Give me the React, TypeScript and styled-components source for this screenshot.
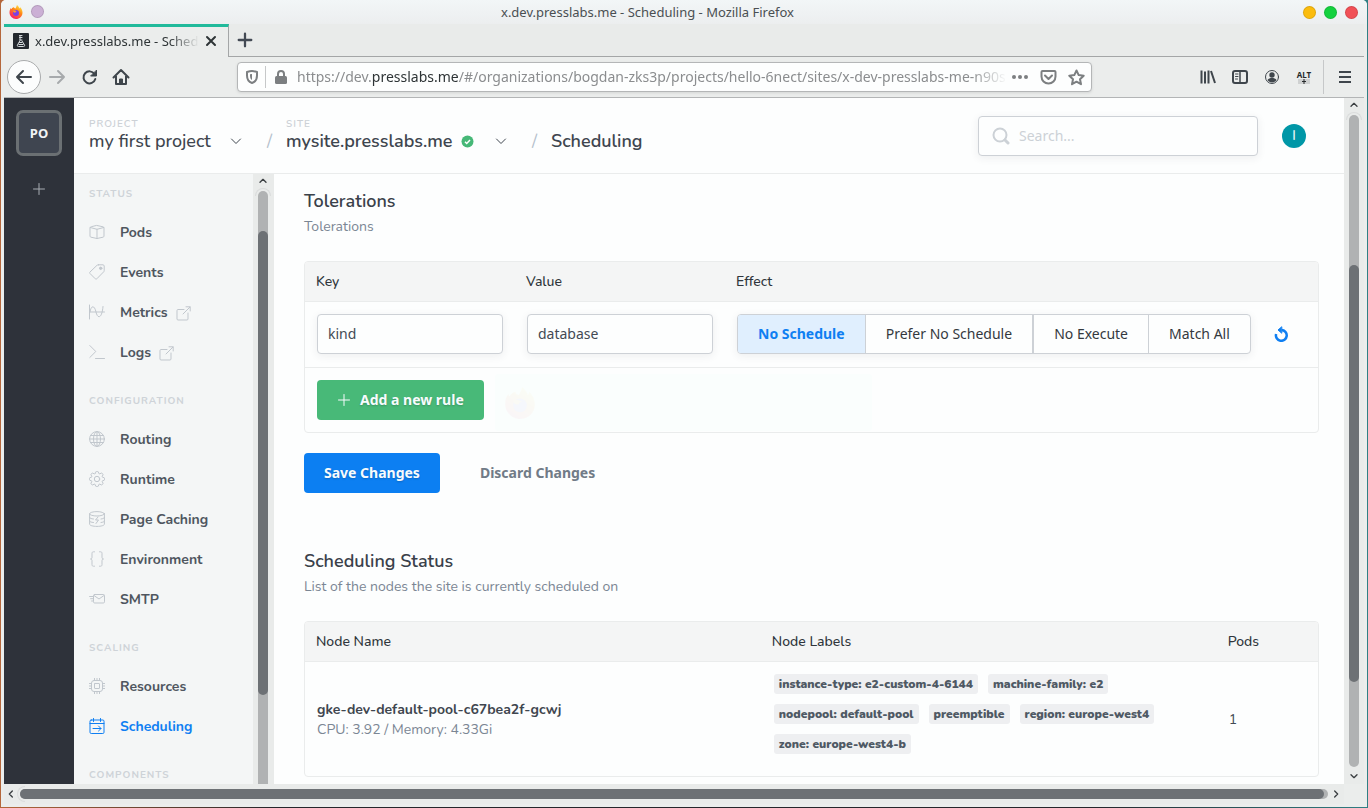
import React from "react";
import styled, { createGlobalStyle, css } from "styled-components";

const ui = `"Noto Sans", "Open Sans", sans-serif`;
const body = `Nunito, Lato, "Noto Sans", sans-serif`;

const GlobalStyle = createGlobalStyle`
  *, *::before, *::after { box-sizing: border-box; }
  html, body { margin: 0; height: 100%; }
  body { background: #2b2b30; font-family: ${body}; font-size: 14px; line-height: 20px; color: #434a54; }
  button, input { font: inherit; color: inherit; }
  button { margin: 0; padding: 0; border: 0; background: none; }
  h1, h2, p { margin: 0; }
  svg { display: block; flex: none; }
`;

/* ---------- browser window ---------- */

const Desktop = styled.div`
  height: 100vh;
  padding: 0 1px 1px;
  background: linear-gradient(90deg, #b5673b, #26262b 20%, #26262b 80%, #2f7f84);
`;

const Window = styled.div`
  height: 100%;
  display: flex;
  flex-direction: column;
  padding: 0 3px 3px;
  border-radius: 5px 5px 0 0;
  overflow: hidden;
  background: #ebedec;
`;

const TitleBar = styled.header`
  flex: none;
  display: flex;
  align-items: center;
  height: 24px;
  margin: 0 -3px;
  padding: 0 9px 0 8px;
  background: linear-gradient(#f2f6f7, #eceeef);
  font-family: ${ui};
  font-size: 13px;
  color: #4a4f52;
`;

const TitleText = styled.span`
  flex: 1;
  text-align: center;
`;

const DotGroup = styled.div<{ $lead?: boolean }>`
  display: flex;
  gap: 8px;
  ${(p) => p.$lead && css`padding-left: 52px;`}
`;

const Dot = styled.button<{ $color: string }>`
  width: 13px;
  height: 13px;
  border-radius: 50%;
  background: ${(p) => p.$color};
  box-shadow: inset 0 0 0 1px rgba(0, 0, 0, 0.12);
`;

const TabStrip = styled.div`
  flex: none;
  display: flex;
  height: 33px;
  background: #e9ebea;
`;

const Tab = styled.div`
  display: flex;
  align-items: center;
  gap: 6px;
  width: 225px;
  padding: 0 11px 2px 9px;
  border-top: 3px solid #21ba9b;
  border-right: 1px solid #a4a6a7;
  background: #ebedec;
  font-family: ${ui};
  font-size: 13px;
  color: #2e3436;
`;

const TabTitle = styled.span`
  flex: 1;
  min-width: 0;
  overflow: hidden;
  white-space: nowrap;
  mask-image: linear-gradient(90deg, #000 82%, transparent);
`;

const TabRest = styled.div`
  flex: 1;
  display: flex;
  align-items: center;
  padding-left: 8px;
  border-bottom: 1px solid #a4a6a7;
`;

const IconButton = styled.button`
  flex: none;
  display: flex;
  align-items: center;
  justify-content: center;
`;

const Toolbar = styled.nav`
  flex: none;
  display: flex;
  align-items: center;
  height: 41px;
  padding: 0 11px 0 3px;
  border-bottom: 1px solid #b3b5b6;
  color: #3f464c;
`;

const BackButton = styled(IconButton)`
  width: 34px;
  height: 34px;
  border: 1px solid #a9abac;
  border-radius: 50%;
  background: #fcfdfd;
`;

const ToolButton = styled(IconButton)<{ $faded?: boolean }>`
  width: 32px;
  height: 32px;
  ${(p) => p.$faded && css`color: #a7aaac;`}
`;

const UrlBar = styled.div`
  flex: 1;
  min-width: 0;
  display: flex;
  align-items: center;
  height: 30px;
  margin: 0 100px;
  padding: 0 6px 0 7px;
  border: 1px solid #b4b6b7;
  border-radius: 4px;
  background: #fdfefe;
  box-shadow: 0 1px 3px rgba(0, 0, 0, 0.1);
  color: #7c7f81;
  font-family: ${ui};
`;

const UrlText = styled.span`
  flex: 1;
  min-width: 0;
  margin: 0 4px 0 9px;
  overflow: hidden;
  white-space: nowrap;
  color: #8b8d8f;
  mask-image: linear-gradient(90deg, #000 95%, transparent);

  strong { font-weight: 400; color: #2e3436; }
`;

const UrlActions = styled.div`
  display: flex;
  align-items: center;
  gap: 11px;
`;

const Rule = styled.span<{ $tall?: boolean }>`
  flex: none;
  width: 1px;
  height: ${(p) => (p.$tall ? 34 : 22)}px;
  margin: 0 ${(p) => (p.$tall ? 13 : 8)}px 0 ${(p) => (p.$tall ? 3 : 6)}px;
  background: #c6c8c9;
`;

const AltMark = styled.span`
  display: flex;
  flex-direction: column;
  align-items: center;
  font: 700 8px/8px ${ui};
  color: #26292b;

  svg { background: #cfd1d1; }
`;

/* ---------- scroll bars ---------- */

const Bar = styled.div<{ $across?: boolean; $size?: number }>`
  flex: none;
  display: flex;
  flex-direction: ${(p) => (p.$across ? "row" : "column")};
  ${(p) => (p.$across ? "height" : "width")}: ${(p) => p.$size ?? 20}px;
  padding: ${(p) => (p.$across ? "5px 0" : "0 6px 0 5px")};
  background: #e9ebea;
  color: #3b3f42;
`;

const BarArrow = styled.span<{ $across?: boolean }>`
  flex: none;
  display: flex;
  align-items: center;
  justify-content: center;
  ${(p) =>
    p.$across
      ? "width: 16px; height: 10px; &:first-child { padding-right: 2px; }"
      : "width: 10px; height: 17px; padding-bottom: 3px; &:last-child { padding: 1px 0 0; }"}
`;

const Trough = styled.div<{ $across?: boolean; $open?: boolean }>`
  position: relative;
  flex: 1;
  display: flex;
  flex-direction: ${(p) => (p.$across ? "row" : "column")};
  ${(p) => (p.$across ? "height" : "width")}: 10px;
  border-radius: ${(p) => (p.$open ? "5px 5px 0 0" : "5px")};
  background: #b0b2b3;

  &::before {
    content: "";
    position: absolute;
    ${(p) =>
      p.$across
        ? "left: -3px; top: -3px; width: 8px; height: 16px; border-radius: 8px 0 0 8px;"
        : "left: -3px; top: -3px; width: 16px; height: 8px; border-radius: 8px 8px 0 0;"}
    border-style: solid;
    border-color: #dadcdc;
    border-width: ${(p) => (p.$across ? "1px 0 1px 1px" : "1px 1px 0")};
  }
`;

const Part = styled.span<{ $grow: number; $thumb?: boolean }>`
  flex: ${(p) => p.$grow} 1 0;
  border-radius: 5px;
  ${(p) => p.$thumb && css`position: relative; background: #6d7175;`}
`;

const BottomBar = styled.div`
  flex: none;
  padding-right: 20px;
`;

/* ---------- dashboard ---------- */

const Viewport = styled.div`
  flex: 1;
  min-height: 0;
  display: flex;
  background: #fdfefe;
`;

const Rail = styled.aside`
  flex: none;
  display: flex;
  flex-direction: column;
  align-items: center;
  gap: 26px;
  width: 70px;
  padding-top: 12px;
  background: #2e323a;
  color: #a8adb3;
`;

const OrgBadge = styled.button`
  width: 46px;
  height: 46px;
  border: 3px solid #6b7073;
  border-radius: 7px;
  background: #3f4550;
  color: #f2f4f5;
  font-family: ${ui};
  font-size: 13px;
  font-weight: 700;
`;

const Page = styled.div`
  flex: 1;
  min-width: 0;
  display: flex;
  flex-direction: column;
`;

const TopBar = styled.header`
  flex: none;
  display: flex;
  align-items: flex-start;
  height: 76px;
  padding: 18px 38px 0 15px;
  border-bottom: 1px solid #eaecec;
`;

const Crumb = styled.div<{ $width?: number }>`
  display: flex;
  flex-direction: column;
  ${(p) => p.$width && css`width: ${p.$width}px;`}
`;

const Caption = styled.span`
  height: 14px;
  line-height: 16px;
  font-size: 10px;
  font-weight: 600;
  letter-spacing: 1px;
  text-transform: uppercase;
  color: #ccd1d6;
`;

const CrumbLine = styled.div<{ $strong?: boolean }>`
  display: flex;
  align-items: center;
  height: 22px;
  font-size: 18px;
  font-weight: ${(p) => (p.$strong ? 650 : 500)};
  color: #3f464f;
  white-space: nowrap;
`;

const CrumbToggle = styled(IconButton)`
  width: 12px;
  height: 12px;
  margin-left: auto;
`;

const Verified = styled.span`
  margin-left: 9px;
`;

const Slash = styled.span`
  width: 44px;
  padding: 14px 14px 0 0;
  line-height: 22px;
  font-size: 18px;
  text-align: right;
  color: #b4c0cc;
`;

const fieldBox = css`
  height: 40px;
  border: 1px solid #cdd1d6;
  border-radius: 4px;
  background: #fdfefe;
  box-shadow: 0 2px 8px rgba(46, 50, 58, 0.08);
  font-family: ${ui};
`;

const SearchBox = styled.label`
  ${fieldBox}
  display: flex;
  align-items: center;
  gap: 9px;
  width: 280px;
  margin-left: auto;
  padding: 0 13px;
  color: #ccd1d6;

  input {
    flex: 1;
    min-width: 0;
    padding: 0;
    border: 0;
    outline: 0;
    background: none;
  }
  input::placeholder { color: #ccd1d6; opacity: 1; }
`;

const Avatar = styled.button`
  width: 24px;
  height: 24px;
  margin: 8px 0 0 24px;
  border-radius: 50%;
  background: #0097a7;
  color: #e8f6f7;
  font-size: 13px;
  font-weight: 600;
`;

const Columns = styled.div`
  flex: 1;
  min-height: 0;
  display: flex;
`;

const SideNav = styled.nav`
  flex: none;
  width: 179px;
  overflow: hidden;
  background: #f4f6f6;
`;

const NavCaption = styled.h2`
  height: 20px;
  margin: 18px 0 9px 15px;
  font-size: 10px;
  font-weight: 700;
  line-height: 22px;
  letter-spacing: 1px;
  text-transform: uppercase;
  color: #ced3d8;

  &:first-child { margin-top: 9px; }
`;

const NavLink = styled.a<{ $active?: boolean }>`
  display: flex;
  align-items: center;
  gap: 15px;
  height: 40px;
  padding-left: 15px;
  font-weight: 700;
  text-decoration: none;
  color: ${(p) => (p.$active ? "#0f7ff2" : "#4f565f")};

  svg { color: ${(p) => (p.$active ? "#0f7ff2" : "#c1c7cd")}; }
`;

const NavText = styled.span`
  display: flex;
  align-items: center;
  gap: 8px;
  padding-top: 2px;
`;

const Content = styled.main`
  flex: 1;
  min-width: 0;
  padding: 15px 25px 0 30px;
  overflow: hidden;
`;

const SectionTitle = styled.h1`
  font-size: 18px;
  font-weight: 650;
  line-height: 24px;
  color: #3a414a;
`;

const SectionNote = styled.p`
  margin: 4px 0 24px;
  color: #7b8694;
`;

const Table = styled.table`
  width: 100%;
  table-layout: fixed;
  border: 1px solid #eaecec;
  border-radius: 4px;
  border-spacing: 0;
  overflow: hidden;

  th {
    height: 40px;
    padding: 0 11px;
    border-bottom: 1px solid #eaecec;
    background: #f4f5f5;
    font-weight: 500;
    text-align: left;
    color: #2f353b;
  }
`;

const Col = styled.col<{ $width?: string }>`
  width: ${(p) => p.$width ?? "auto"};
`;

const Cell = styled.td<{ $text?: boolean; $ruled?: boolean }>`
  padding: ${(p) => (p.$text ? "14px" : "12px")} 12px ${(p) => (p.$ruled ? "13px" : "12px")};
  ${(p) => p.$ruled && css`border-bottom: 1px solid #eaecec;`}
`;

const TextField = styled.input`
  ${fieldBox}
  display: block;
  width: 100%;
  padding: 0 10px 2px;
  outline: 0;
`;

const EffectCell = styled.div`
  display: flex;
  align-items: center;
  gap: 22px;
`;

const ButtonGroup = styled.div`
  ${fieldBox}
  display: flex;
  overflow: hidden;
`;

const Choice = styled.button<{ $on?: boolean }>`
  padding: 0 20px;
  white-space: nowrap;
  color: #34393e;
  & + & { border-left: 1px solid #cdd1d6; }
  & + & + & { border-left-width: 2px; }
  & + & + & + & { border-left-width: 1px; }
  ${(p) => p.$on && css`background: #e0effe; color: #0f7ff2; font-weight: 700;`}
`;

const ResetButton = styled(IconButton)`
  color: #0f7ff2;
`;

const Action = styled.button<{ $tone: "green" | "blue" | "plain" }>`
  display: inline-flex;
  align-items: center;
  gap: 9px;
  height: 40px;
  padding: 0 20px;
  border-radius: 4px;
  font-family: ${ui};
  font-weight: 700;
  ${(p) =>
    p.$tone === "plain"
      ? css`color: #717b87;`
      : css`
          background: ${p.$tone === "green" ? "#48b978" : "#0c7ff2"};
          color: #f7fbfd;
          text-shadow: 0 1px 2px rgba(0, 0, 0, 0.2);
        `}
`;

const AddRow = styled.div`
  position: relative;
  display: flex;
`;

/* a window-title bubble in the last moments of its fade */
const Bubble = styled.div`
  position: absolute;
  left: 178px;
  top: -6px;
  display: flex;
  align-items: center;
  width: 377px;
  height: 57px;
  padding-left: 9px;
  border-radius: 3px;
  background: #fafefd;

  svg { opacity: 0.03; }
`;

const ActionRow = styled.div`
  display: flex;
  gap: 20px;
  margin: 20px 0 56px;
`;

const NodeName = styled.div`
  font-weight: 700;
  color: #3f464f;
`;

const NodeSpecs = styled.div`
  color: #7b8694;
`;

const LabelList = styled.ul`
  display: flex;
  flex-wrap: wrap;
  gap: 10px;
  max-width: 400px;
  margin: 0 0 10px;
  padding: 0 0 0 1px;
  list-style: none;
`;

const Label = styled.li`
  height: 20px;
  padding: 0 5px;
  border-radius: 3px;
  background: #eeeff1;
  font-size: 12px;
  font-weight: 900;
  line-height: 20px;
  color: #4f5964;
`;

/* ---------- drawings ---------- */

type GlyphProps = { size?: number; width?: number; view?: number; children: React.ReactNode };

const Glyph = ({ size = 16, width = 1, view = 16, children }: GlyphProps) => (
  <svg
    width={size}
    height={size}
    viewBox={`0 0 ${view} ${view}`}
    fill="none"
    stroke="currentColor"
    strokeWidth={width}
    strokeLinecap="round"
    strokeLinejoin="round"
    aria-hidden="true"
  >
    {children}
  </svg>
);

const FirefoxLogo = ({ size = 14 }: { size?: number }) => (
  <svg width={size} height={size} viewBox="0 0 28 28" aria-hidden="true">
    <defs>
      <linearGradient id="ff-flame" x1="0.8" y1="0" x2="0.2" y2="1">
        <stop offset="0" stopColor="#fff04a" />
        <stop offset="0.4" stopColor="#ff8a16" />
        <stop offset="0.8" stopColor="#ff3750" />
        <stop offset="1" stopColor="#e31587" />
      </linearGradient>
    </defs>
    <path
      d="M16 0c2 2 4 4 5 7 1-1 1-2 1-3 3 3 5 7 5 11 0 8-6 13-13 13S1 22 1 15c0-4 1-7 3-9 0 1 0 2 1 2 1-2 3-3 5-4 0 1 1 3 3 3 1-2 2-4 3-7z"
      fill="url(#ff-flame)"
    />
    <circle cx="14" cy="16" r="6" fill="#7b3fe4" />
    <path d="M8 12c3-2 6 0 8 1-2 0-3 1-3 2-2 1-4 0-5-3z" fill="#ff9a2a" />
  </svg>
);

const Favicon = () => (
  <svg width="16" height="16" viewBox="0 0 16 16" aria-hidden="true">
    <rect width="16" height="16" rx="1" fill="#23282e" />
    <path
      d="M6.500 2.500h2.500M6.500 4.500h2.500M7 2.500v5L4.500 12c-.4 1 0 1.500 1 1.500h5c1 0 1.400-.5 1-1.500L9 8M7 7h2M6.500 9.500h2.500M6 11.500h4"
      fill="none"
      stroke="#d5dadd"
      strokeLinecap="round"
    />
  </svg>
);

const Cross = () => (
  <Glyph size={12} view={12} width={2}><path d="M2 2l8 8M10 2l-8 8" /></Glyph>
);
const Plus = ({ size = 14, width = 1 }: { size?: number; width?: number }) => (
  <Glyph size={size} view={14} width={width}><path d="M7 1.500v11M1.500 7h11" /></Glyph>
);
const ArrowLeft = () => (
  <Glyph size={18} view={18} width={2}><path d="M16 9H2M8 3L2 9l6 6" /></Glyph>
);
const ArrowRight = () => (
  <Glyph size={18} view={18} width={2}><path d="M2 9h14M10 3l6 6-6 6" /></Glyph>
);
const Reload = () => (
  <Glyph size={17} view={17} width={2}>
    <path d="M13.500 5A6 6 0 1 0 14.300 10" />
    <path d="M15.500 1.500v5.500H10z" fill="currentColor" strokeWidth={1} />
  </Glyph>
);
const Home = () => (
  <Glyph size={18} view={18} width={2}>
    <path d="M1.500 9.500L9 2l7.500 7.500M4 8v8h10V8" />
    <path d="M7.500 16v-5h3v5z" fill="currentColor" strokeWidth={1} />
  </Glyph>
);
const Shield = () => (
  <Glyph size={14} view={14} width={2}>
    <path d="M7 1c2 0 3.500.5 5 1v3.500c0 4-2 6.500-5 7.500-3-1-5-3.500-5-7.500V2c1.500-.5 3-1 5-1z" />
    <path d="M7 4v6c-1.500-1-2-2.500-2-4.500V4.300z" fill="currentColor" stroke="none" />
  </Glyph>
);
const Lock = () => (
  <Glyph size={14} view={14} width={2}>
    <path d="M4 7V4a3 3 0 0 1 6 0v3" />
    <rect x="1" y="6" width="12" height="8" rx="1.500" fill="currentColor" stroke="none" />
  </Glyph>
);
const Dots = () => (
  <Glyph size={18} view={18}>
    <g fill="currentColor" stroke="none">
      <circle cx="3" cy="9" r="2" /><circle cx="9" cy="9" r="2" /><circle cx="15" cy="9" r="2" />
    </g>
  </Glyph>
);
const Pocket = () => (
  <Glyph size={17} view={17} width={2}>
    <path d="M2.500 2h12c.6 0 1 .4 1 1v4.500a7 7 0 0 1-14 0V3c0-.6.400-1 1-1z" />
    <path d="M5 6.500L8.500 10 12 6.500" />
  </Glyph>
);
const Star = () => (
  <Glyph size={17} view={17} width={2}>
    <path d="M8.500 1.500l2.200 4.600 5 .6-3.700 3.500 1 5-4.500-2.500L4 15.200l1-5L1.300 6.700l5-.6z" />
  </Glyph>
);
const Library = () => (
  <Glyph width={2}><path d="M1.500 1.500v13M5 2.500v12M8.500 1.500v13M11 2l4 12" strokeLinecap="butt" /></Glyph>
);
const SidebarIcon = () => (
  <Glyph width={2}>
    <rect x="1" y="2" width="14" height="12" rx="2" />
    <path d="M8 2v12" strokeWidth={1.500} />
    <path d="M3.500 5h2.500M3.500 7.500h2.500M3.500 10h2" strokeWidth={1} />
  </Glyph>
);
const Account = () => (
  <Glyph width={1}>
    <circle cx="8" cy="8" r="6.500" />
    <circle cx="8" cy="6" r="2.700" fill="currentColor" stroke="none" />
    <path d="M3.500 11c1-1.500 2.500-2 4.500-2s3.500.5 4.500 2c-1 1.500-2.500 2.500-4.500 2.500S4.500 12.500 3.500 11z" fill="currentColor" stroke="none" />
  </Glyph>
);
const Menu = () => (
  <Glyph width={2}><path d="M2 3h12M2 8h12M2 13h12" strokeLinecap="butt" /></Glyph>
);
const Chevron = ({ turn = 0, width = 1, size = 12 }: { turn?: number; width?: number; size?: number }) => (
  <Glyph size={size} view={12} width={width}>
    <path d="M1.500 4L6 8.500 10.500 4" transform={`rotate(${turn} 6 6)`} />
  </Glyph>
);
const CheckBadge = () => (
  <svg width="13" height="13" viewBox="0 0 13 13" aria-label="Ready" role="img">
    <circle cx="6.500" cy="6.500" r="6" fill="#46b877" />
    <path d="M4 6.800l1.700 1.700L9 5" fill="none" stroke="#fff" strokeWidth="1.500" />
  </svg>
);
const Magnifier = () => (
  <Glyph size={18} view={18} width={2}>
    <circle cx="8" cy="8" r="6.500" />
    <path d="M13 13l3 3" strokeWidth={3} />
  </Glyph>
);
const Undo = () => (
  <Glyph width={2}>
    <path d="M3.100 8A5.400 5.400 0 1 0 8.500 4" strokeWidth={2.500} strokeLinecap="butt" />
    <path d="M8.500 1L5 4l3.500 3z" fill="currentColor" strokeWidth={1} />
  </Glyph>
);
const External = () => (
  <Glyph size={15} view={15}>
    <path d="M8 3.500H2c-.6 0-1 .4-1 1V13c0 .6.400 1 1 1h9c.6 0 1-.4 1-1V7M10 .8h4.200V5M14 1L7 8" />
  </Glyph>
);

const navIcons: Record<string, React.ReactNode> = {
  pods: <path d="M8 1.500l6 1.300c.6.200 1 .5 1 1v8.400c0 .5-.4.800-1 1L8 14.500l-6-1.300c-.6-.2-1-.5-1-1V3.800c0-.5.4-.8 1-1zM1.300 3.500L8 5.300l6.700-1.800M8 5.300v9.200" />,
  events: (
    <>
      <path d="M9.500.8H14c.6 0 1.200.5 1.200 1.200v4.500c0 .6-.2 1-.6 1.400l-6.800 6.900c-.5.500-1 .5-1.500 0L1 9.500C.5 9 .5 8.500 1 8L8 1.300c.4-.3.900-.5 1.500-.5z" />
      <circle cx="11.700" cy="4.300" r="1.200" fill="currentColor" />
    </>
  ),
  metrics: <path d="M.5 1v14M.8 8h14.700M1 8c1-7 4.500-7 6 0s6 7 7-5.500" />,
  logs: <path d="M.8 1.500l6 6-6 6M6.500 14.500h9" />,
  routing: (
    <>
      <circle cx="8" cy="8" r="7.400" />
      <ellipse cx="8" cy="8" rx="3.500" ry="7.400" />
      <path d="M8 .6v14.800M.6 8h14.800M1.600 4.500h12.800M1.600 11.500h12.800" />
    </>
  ),
  runtime: (
    <>
      <circle cx="8" cy="8" r="2.700" />
      <path d="M6.600.9c.4-.5 2.400-.5 2.800 0l.4 1.600 1 .4 1.400-.8c.8-.3 2.100 1 1.800 1.800l-.8 1.400.4 1 1.600.4c.5.4.5 2.200 0 2.600l-1.600.4-.4 1 .8 1.400c.3.8-1 2.100-1.800 1.800l-1.400-.8-1 .4-.4 1.600c-.4.5-2.400.5-2.800 0l-.4-1.600-1-.4-1.400.8c-.8.3-2.100-1-1.800-1.800l.8-1.400-.4-1-1.600-.4c-.5-.4-.5-2.200 0-2.600l1.600-.4.4-1-.8-1.400c-.3-.8 1-2.100 1.800-1.800l1.400.8 1-.4z" />
    </>
  ),
  caching: (
    <>
      <ellipse cx="8" cy="2.800" rx="7.400" ry="2.200" />
      <path d="M.6 2.800v10.400c0 1.200 3.300 2.200 7.400 2.200s7.400-1 7.400-2.200V2.800" />
      <path d="M.6 6.500c0 .8 1.500 1.300 3.900 1.500M.6 10c0 .8 1.500 1.300 3.900 1.500M15.400 6.500c0 .8-1.200 1.200-3.400 1.500M15.400 10c0 .8-1.200 1.200-3.400 1.500M9 6l-2.500 3h3L7 12.500" />
    </>
  ),
  environment: <path d="M5.500.8h-1c-1 0-1.500.5-1.500 1.500v4c0 1-.5 1.700-1.500 1.700C2.500 8 3 8.700 3 9.700v4c0 1 .5 1.500 1.500 1.500h1M10.500.8h1c1 0 1.500.5 1.500 1.500v4c0 1 .5 1.700 1.500 1.700-1 0-1.500.7-1.500 1.700v4c0 1-.5 1.500-1.500 1.500h-1" />,
  smtp: (
    <>
      <rect x="4.500" y="3.500" width="11" height="8.500" rx="1.200" />
      <path d="M5 4.500l5 3.500 5-3.500M.6 5.500h3M1.600 7.700h2M2.600 10h1" />
    </>
  ),
  resources: (
    <>
      <rect x="2.500" y="2.500" width="11" height="11" rx="2.500" />
      <rect x="5.500" y="5.500" width="5" height="5" rx=".5" />
      <path d="M5.500 0v2.500M8 0v2.500M10.500 0v2.500M5.500 13.500V16M8 13.500V16M10.500 13.500V16M0 5.500h2.500M0 8h2.500M0 10.500h2.500M13.500 5.500H16M13.500 8H16M13.500 10.500H16" />
    </>
  ),
  scheduling: (
    <>
      <rect x="1" y="2" width="14" height="13.500" rx="1.200" />
      <path d="M1 5.500h14M4.500.5v3M11.500.5v3M4 10.500h8M9.500 8l2.500 2.500L9.500 13" />
    </>
  ),
};

/* ---------- data ---------- */

type NavItem = { id: string; name: string; external?: boolean; active?: boolean };

const nav: { title: string; items: NavItem[] }[] = [
  {
    title: "Status",
    items: [
      { id: "pods", name: "Pods" },
      { id: "events", name: "Events" },
      { id: "metrics", name: "Metrics", external: true },
      { id: "logs", name: "Logs", external: true },
    ],
  },
  {
    title: "Configuration",
    items: [
      { id: "routing", name: "Routing" },
      { id: "runtime", name: "Runtime" },
      { id: "caching", name: "Page Caching" },
      { id: "environment", name: "Environment" },
      { id: "smtp", name: "SMTP" },
    ],
  },
  {
    title: "Scaling",
    items: [
      { id: "resources", name: "Resources" },
      { id: "scheduling", name: "Scheduling", active: true },
    ],
  },
  { title: "Components", items: [] },
];

const effects = ["No Schedule", "Prefer No Schedule", "No Execute", "Match All"];

const nodeLabels = [
  "instance-type: e2-custom-4-6144",
  "machine-family: e2",
  "nodepool: default-pool",
  "preemptible",
  "region: europe-west4",
  "zone: europe-west4-b",
];

/* ---------- composition ---------- */

const BrowserChrome = () => (
  <>
    <TitleBar>
      <DotGroup>
        <FirefoxLogo />
        <Dot $color="#cbb0d5" aria-label="Pin window" />
      </DotGroup>
      <TitleText>x.dev.presslabs.me - Scheduling - Mozilla Firefox</TitleText>
      <DotGroup $lead>
        <Dot $color="#fbbc0d" aria-label="Minimize" />
        <Dot $color="#14d13f" aria-label="Maximize" />
        <Dot $color="#f15056" aria-label="Close" />
      </DotGroup>
    </TitleBar>
    <TabStrip>
      <Tab>
        <Favicon />
        <TabTitle>x.dev.presslabs.me - Sched</TabTitle>
        <IconButton aria-label="Close tab"><Cross /></IconButton>
      </Tab>
      <TabRest>
        <IconButton aria-label="New tab"><Plus size={16} width={2} /></IconButton>
      </TabRest>
    </TabStrip>
    <Toolbar>
      <BackButton aria-label="Back"><ArrowLeft /></BackButton>
      <ToolButton $faded aria-label="Forward"><ArrowRight /></ToolButton>
      <ToolButton aria-label="Reload"><Reload /></ToolButton>
      <ToolButton aria-label="Home"><Home /></ToolButton>
      <UrlBar>
        <Shield />
        <Rule />
        <Lock />
        <UrlText>
          https://dev.<strong>presslabs.me</strong>
          /#/organizations/bogdan-zks3p/projects/hello-6nect/sites/x-dev-presslabs-me-n90s
        </UrlText>
        <UrlActions>
          <Dots />
          <Pocket />
          <Star />
        </UrlActions>
      </UrlBar>
      <ToolButton aria-label="Library"><Library /></ToolButton>
      <ToolButton aria-label="Sidebars"><SidebarIcon /></ToolButton>
      <ToolButton aria-label="Account"><Account /></ToolButton>
      <ToolButton aria-label="Alt extension">
        <AltMark>
          ALT
          <svg width="12" height="5" viewBox="0 0 12 5" aria-hidden="true">
            <path d="M6 0v5M4 2.500h4" stroke="#26292b" />
          </svg>
        </AltMark>
      </ToolButton>
      <Rule $tall />
      <IconButton aria-label="Menu"><Menu /></IconButton>
    </Toolbar>
  </>
);

const Header = () => (
  <TopBar>
    <Crumb $width={153}>
      <Caption>Project</Caption>
      <CrumbLine>
        my first project
        <CrumbToggle aria-label="Switch project"><Chevron /></CrumbToggle>
      </CrumbLine>
    </Crumb>
    <Slash>/</Slash>
    <Crumb $width={221}>
      <Caption>Site</Caption>
      <CrumbLine $strong>
        mysite.presslabs.me
        <Verified><CheckBadge /></Verified>
        <CrumbToggle aria-label="Switch site"><Chevron /></CrumbToggle>
      </CrumbLine>
    </Crumb>
    <Slash>/</Slash>
    <Crumb>
      <Caption />
      <CrumbLine $strong>Scheduling</CrumbLine>
    </Crumb>
    <SearchBox>
      <Magnifier />
      <input type="search" placeholder="Search..." aria-label="Search" />
    </SearchBox>
    <Avatar>I</Avatar>
  </TopBar>
);

const Navigation = () => (
  <SideNav>
    {nav.map((group) => (
      <React.Fragment key={group.title}>
        <NavCaption>{group.title}</NavCaption>
        {group.items.map((item) => (
          <NavLink key={item.id} href={`#${item.id}`} $active={item.active}>
            <Glyph>{navIcons[item.id]}</Glyph>
            <NavText>
              {item.name}
              {item.external && <External />}
            </NavText>
          </NavLink>
        ))}
      </React.Fragment>
    ))}
  </SideNav>
);

const Tolerations = () => (
  <section>
    <SectionTitle>Tolerations</SectionTitle>
    <SectionNote>Tolerations</SectionNote>
    <Table>
      <colgroup>
        <Col $width="210px" />
        <Col $width="210px" />
        <Col />
      </colgroup>
      <thead>
        <tr><th>Key</th><th>Value</th><th>Effect</th></tr>
      </thead>
      <tbody>
        <tr>
          <Cell $ruled><TextField aria-label="Key" defaultValue="kind" /></Cell>
          <Cell $ruled><TextField aria-label="Value" defaultValue="database" /></Cell>
          <Cell $ruled>
            <EffectCell>
              <ButtonGroup role="group" aria-label="Effect">
                {effects.map((name, i) => (
                  <Choice key={name} $on={i === 0} aria-pressed={i === 0}>{name}</Choice>
                ))}
              </ButtonGroup>
              <ResetButton aria-label="Reset rule"><Undo /></ResetButton>
            </EffectCell>
          </Cell>
        </tr>
        <tr>
          <Cell colSpan={3}>
            <AddRow>
              <Action $tone="green"><Plus />Add a new rule</Action>
              <Bubble aria-hidden="true"><FirefoxLogo size={32} /></Bubble>
            </AddRow>
          </Cell>
        </tr>
      </tbody>
    </Table>
    <ActionRow>
      <Action $tone="blue">Save Changes</Action>
      <Action $tone="plain">Discard Changes</Action>
    </ActionRow>
  </section>
);

const SchedulingStatus = () => (
  <section>
    <SectionTitle>Scheduling Status</SectionTitle>
    <SectionNote>List of the nodes the site is currently scheduled on</SectionNote>
    <Table>
      <colgroup>
        <Col $width="45%" />
        <Col $width="45%" />
        <Col $width="10%" />
      </colgroup>
      <thead>
        <tr><th>Node Name</th><th>Node Labels</th><th>Pods</th></tr>
      </thead>
      <tbody>
        <tr>
          <Cell $text>
            <NodeName>gke-dev-default-pool-c67bea2f-gcwj</NodeName>
            <NodeSpecs>CPU: 3.92 / Memory: 4.33Gi</NodeSpecs>
          </Cell>
          <Cell>
            <LabelList>
              {nodeLabels.map((text) => <Label key={text}>{text}</Label>)}
            </LabelList>
          </Cell>
          <Cell $text>1</Cell>
        </tr>
      </tbody>
    </Table>
  </section>
);

export default function App() {
  return (
    <Desktop>
      <GlobalStyle />
      <Window>
        <BrowserChrome />
        <Viewport>
          <Rail>
            <OrgBadge>PO</OrgBadge>
            <IconButton aria-label="New organization"><Plus /></IconButton>
          </Rail>
          <Page>
            <Header />
            <Columns>
              <Navigation />
              <Bar $size={21}>
                <BarArrow><Chevron turn={180} width={2} size={8} /></BarArrow>
                <Trough $open>
                  <Part $grow={40} />
                  <Part $grow={464} $thumb />
                  <Part $grow={89} />
                </Trough>
              </Bar>
              <Content>
                <Tolerations />
                <SchedulingStatus />
              </Content>
            </Columns>
          </Page>
          <Bar>
            <BarArrow><Chevron turn={180} width={2} size={8} /></BarArrow>
            <Trough>
              <Part $grow={150} />
              <Part $grow={418} $thumb />
              <Part $grow={85} />
            </Trough>
            <BarArrow><Chevron width={2} size={8} /></BarArrow>
          </Bar>
        </Viewport>
        <BottomBar>
          <Bar $across>
            <BarArrow $across><Chevron turn={90} width={2} size={8} /></BarArrow>
            <Trough $across>
              <Part $grow={1303} $thumb />
              <Part $grow={4} />
            </Trough>
            <BarArrow $across><Chevron turn={-90} width={2} size={8} /></BarArrow>
          </Bar>
        </BottomBar>
      </Window>
    </Desktop>
  );
}
